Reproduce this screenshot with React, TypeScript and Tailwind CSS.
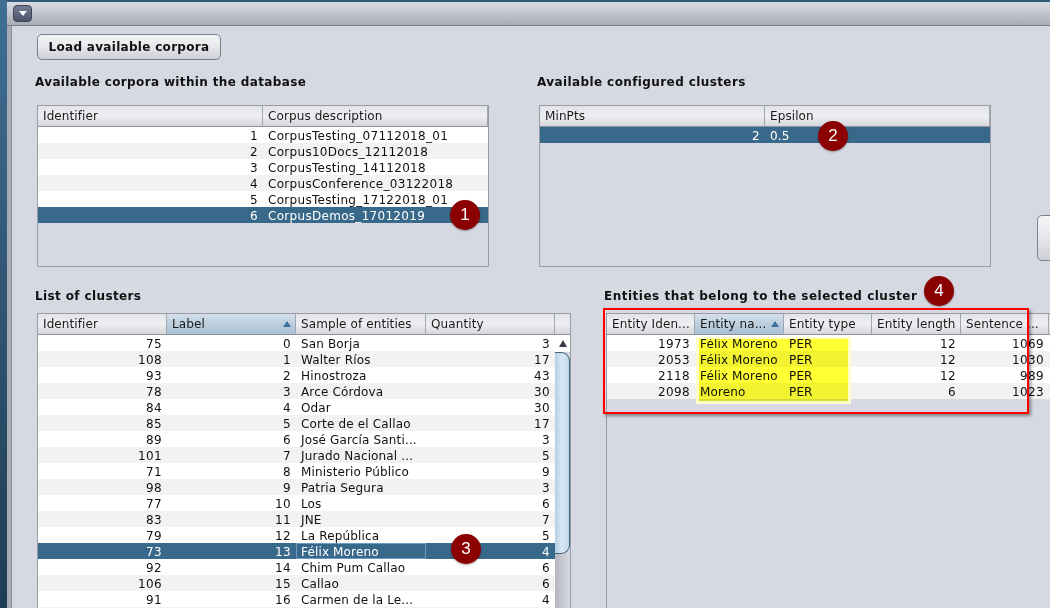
type Col = { title: string; width: number; right?: boolean; sorted?: boolean; wide?: boolean }

const corporaCols: Col[] = [
  { title: 'Identifier', width: 225, right: true },
  { title: 'Corpus description', width: 225, wide: true },
]
const corporaRows = [
  ['1', 'CorpusTesting_07112018_01'],
  ['2', 'Corpus10Docs_12112018'],
  ['3', 'CorpusTesting_14112018'],
  ['4', 'CorpusConference_03122018'],
  ['5', 'CorpusTesting_17122018_01'],
  ['6', 'CorpusDemos_17012019'],
]

const clusterConfigCols: Col[] = [
  { title: 'MinPts', width: 225, right: true },
  { title: 'Epsilon', width: 225 },
]

const clusterCols: Col[] = [
  { title: 'Identifier', width: 129, right: true },
  { title: 'Label', width: 129, right: true, sorted: true },
  { title: 'Sample of entities', width: 130 },
  { title: 'Quantity', width: 129, right: true },
]
const clusterRows = [
  ['75', '0', 'San Borja', '3'],
  ['108', '1', 'Walter Ríos', '17'],
  ['93', '2', 'Hinostroza', '43'],
  ['78', '3', 'Arce Córdova', '30'],
  ['84', '4', 'Odar', '30'],
  ['85', '5', 'Corte de el Callao', '17'],
  ['89', '6', 'José García Santi...', '3'],
  ['101', '7', 'Jurado Nacional ...', '5'],
  ['71', '8', 'Ministerio Público', '9'],
  ['98', '9', 'Patria Segura', '3'],
  ['77', '10', 'Los', '6'],
  ['83', '11', 'JNE', '7'],
  ['79', '12', 'La República', '5'],
  ['73', '13', 'Félix Moreno', '4'],
  ['92', '14', 'Chim Pum Callao', '6'],
  ['106', '15', 'Callao', '6'],
  ['91', '16', 'Carmen de la Le...', '4'],
  ['', '', '', ''],
]

const entityCols: Col[] = [
  { title: 'Entity Iden...', width: 88, right: true },
  { title: 'Entity na...', width: 89, sorted: true },
  { title: 'Entity type', width: 88 },
  { title: 'Entity length', width: 89, right: true },
  { title: 'Sentence ...', width: 88, right: true },
  { title: '', width: 60 },
]
const entityRows = [
  ['1973', 'Félix Moreno', 'PER', '12', '1069', ''],
  ['2053', 'Félix Moreno', 'PER', '12', '1030', ''],
  ['2118', 'Félix Moreno', 'PER', '12', '989', ''],
  ['2098', 'Moreno', 'PER', '6', '1023', ''],
]

function HeaderRow({ cols }: { cols: Col[] }) {
  return (
    <div className="flex h-[21px] shrink-0 border-b border-[#8d9099]">
      {cols.map((col, i) => (
        <div
          key={i}
          style={{ width: col.width }}
          className={`flex shrink-0 items-center justify-between border-r border-[#a3a6ae] pl-[5px] pr-[4px] text-[12px] tracking-[0.1px] text-[#1a1a1a] ${
            col.sorted
              ? 'bg-gradient-to-b from-[#d3e0ea] via-[#bccfde] to-[#a9c0d3]'
              : 'bg-gradient-to-b from-[#e2e3e8] via-[#eeeff2] to-[#d5d7dd]'
          }`}
        >
          <span className="overflow-hidden whitespace-nowrap">{col.title}</span>
          {col.sorted && <span className="h-0 w-0 border-x-[4px] border-b-[6px] border-x-transparent border-b-[#3f6f9a]" />}
        </div>
      ))}
    </div>
  )
}

function DataRow({ cols, row, index, selected, focusCol }: { cols: Col[]; row: string[]; index: number; selected: boolean; focusCol?: number }) {
  const bg = selected ? 'bg-[#39698a] text-white' : index % 2 === 0 ? 'bg-white text-[#111]' : 'bg-[#f2f2f2] text-[#111]'
  return (
    <div className={`flex h-[16px] text-[12px] ${bg}`}>
      {row.map((cell, i) => (
        <div
          key={i}
          style={{ width: cols[i].width }}
          className={`h-[16px] shrink-0 overflow-hidden whitespace-nowrap ${
            cols[i].right ? 'text-right tracking-[0.35px]' : cols[i].wide ? 'text-left tracking-[0.3px]' : 'text-left tracking-[0.15px]'
          } ${focusCol === i ? 'border border-[#6f9bc2] px-[4px] leading-[16px]' : 'px-[5px] leading-[18px]'}`}
        >
          {cell}
        </div>
      ))}
    </div>
  )
}

function Scrollbar() {
  return (
    <div className="flex w-[15px] shrink-0 flex-col bg-gradient-to-r from-[#b4b7be] to-[#d8dbe2]">
      <div className="flex h-[17px] items-center justify-center bg-white">
        <span className="h-0 w-0 border-x-[4px] border-b-[7px] border-x-transparent border-b-[#3a3d45]" />
      </div>
      <div className="h-[202px] rounded-r-[9px] border-y border-r border-[#3d5f7c] bg-gradient-to-r from-[#b4cde2] via-[#d9e8f5] to-[#c2d8ea]" />
    </div>
  )
}

function Badge({ n, className }: { n: number; className: string }) {
  return (
    <div className={`absolute flex h-[30px] w-[30px] items-center justify-center rounded-full bg-[#8b0000] font-['Liberation_Sans',sans-serif] text-[17px] text-white shadow-[0_1px_2px_rgba(0,0,0,0.35)] ${className}`}>
      {n}
    </div>
  )
}

const heading = 'text-[12px] font-bold leading-[16px] text-[#111]'

export default function App() {
  return (
    <div className="relative flex h-[608px] w-[1050px] overflow-hidden bg-[#d6d9e1] font-['DejaVu_Sans',sans-serif]">
      {/* window edge */}
      <div className="w-[7px] shrink-0 bg-gradient-to-b from-[#3f6f94] to-[#1f3d52]" />

      <div className="flex min-w-0 flex-1 flex-col">
        <div className="h-[2px] shrink-0 bg-[#2f5a7c]" />
        <div className="flex h-[24px] shrink-0 items-center rounded-tl-[4px] border-b border-[#7b7e86] bg-gradient-to-b from-[#d9dce3] to-[#a9acb4] pl-[6px]">
          <div className="flex h-[17px] w-[19px] items-center justify-center rounded-[4px] border border-[#3e4456] bg-gradient-to-b from-[#767e96] to-[#4a5168]">
            <span className="h-0 w-0 border-x-[4px] border-t-[5px] border-x-transparent border-t-white" />
          </div>
        </div>

        <div className="flex min-h-0 flex-1">
          <div className="w-[5px] shrink-0 border-r border-[#8b8e97] bg-[#a9acb4]" />

          <div className="flex flex-1 flex-col pl-[23px]">
            <button className="ml-[2px] mt-[8px] h-[26px] w-[184px] rounded-[5px] border border-[#7d8088] bg-gradient-to-b from-[#f4f5f7] via-[#e6e7ea] to-[#cdd0d6] text-[12px] font-bold tracking-[0.3px] text-[#111]">
              Load available corpora
            </button>

            {/* corpora and configured clusters */}
            <div className="mt-[6px] flex">
              <div className="w-[454px] shrink-0">
                <div className={`${heading} h-[39px] pt-[8px] tracking-[0.36px]`}>Available corpora within the database</div>
                <div className="ml-[2px] h-[162px] w-[452px] border border-[#9a9da5]">
                  <HeaderRow cols={corporaCols} />
                  {corporaRows.map((row, i) => (
                    <DataRow key={i} cols={corporaCols} row={row} index={i} selected={i === 5} />
                  ))}
                </div>
              </div>
              <div className="ml-[48px] w-[454px] shrink-0">
                <div className={`${heading} h-[39px] pt-[8px] tracking-[0.4px]`}>Available configured clusters</div>
                <div className="ml-[2px] h-[162px] w-[452px] border border-[#9a9da5]">
                  <HeaderRow cols={clusterConfigCols} />
                  <DataRow cols={clusterConfigCols} row={['2', '0.5']} index={0} selected />
                </div>
              </div>
              <div className="ml-[46px] mt-[149px] flex h-[46px] w-[40px] shrink-0 items-center rounded-[5px] border border-[#7d8088] bg-gradient-to-b from-[#f4f5f7] via-[#e6e7ea] to-[#cdd0d6] pl-[11px] text-[13px] font-bold text-[#111]">
                &lt;
              </div>
            </div>

            {/* clusters and entities */}
            <div className="mt-[19px] flex min-h-0 flex-1">
              <div className="w-[536px] shrink-0">
                <div className={`${heading} h-[27px] pt-[2px] tracking-[0.38px]`}>List of clusters</div>
                <div className="ml-[2px] w-[534px] border border-[#9a9da5]">
                  <div className="flex">
                    <HeaderRow cols={clusterCols} />
                    <div className="h-[21px] flex-1 border-b border-[#8d9099] bg-gradient-to-b from-[#e2e3e8] via-[#eeeff2] to-[#d5d7dd]" />
                  </div>
                  <div className="flex">
                    <div className="w-[517px] shrink-0">
                      {clusterRows.map((row, i) => (
                        <DataRow key={i} cols={clusterCols} row={row} index={i} selected={i === 13} focusCol={i === 13 ? 2 : undefined} />
                      ))}
                    </div>
                    <Scrollbar />
                  </div>
                </div>
              </div>
              <div className="ml-[33px] shrink-0">
                <div className={`${heading} h-[27px] pt-[2px] tracking-[0.5px]`}>Entities that belong to the selected cluster</div>
                <div className="ml-[2px] h-[300px] w-[480px] border-l border-t border-[#9a9da5]">
                  <HeaderRow cols={entityCols} />
                  {entityRows.map((row, i) => (
                    <DataRow key={i} cols={entityCols} row={row} index={i} selected={false} />
                  ))}
                </div>
              </div>
            </div>
          </div>
        </div>
      </div>

      {/* annotations drawn over the screenshot */}
      <div className="absolute left-[696px] top-[337px] h-[67px] w-[155px] border-x-[3px] border-b-[3px] border-t-2 border-[#ffffc8]">
        <div className="h-full w-full bg-[#ffff33] mix-blend-multiply" />
      </div>
      <div className="absolute left-[603px] top-[308px] h-[106px] w-[426px] border-2 border-[#ff0000] shadow-[2px_2px_3px_rgba(0,0,0,0.4)]" />
      <Badge n={1} className="left-[450px] top-[200px]" />
      <Badge n={2} className="left-[818px] top-[121px]" />
      <Badge n={3} className="left-[451px] top-[534px]" />
      <Badge n={4} className="left-[924px] top-[276px]" />
    </div>
  )
}
